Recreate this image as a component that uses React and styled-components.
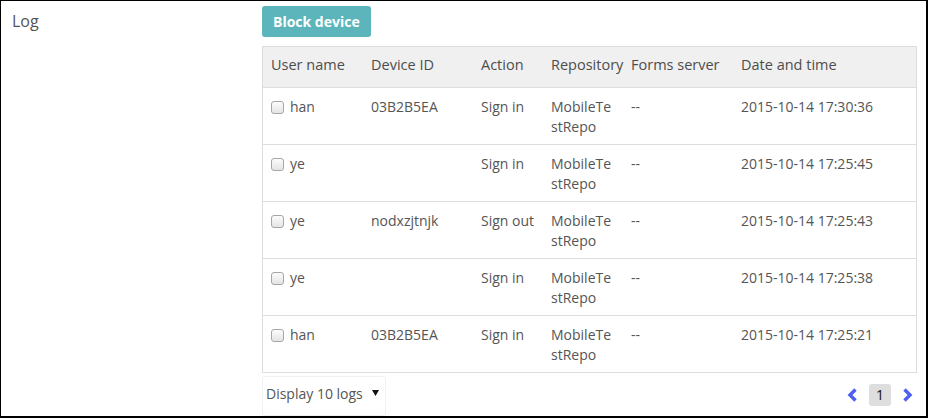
import React from "react";
import styled, { createGlobalStyle } from "styled-components";

const GlobalStyle = createGlobalStyle`
  html, body { margin: 0; padding: 0; background: #fff; }
  body { font-family: "Open Sans", "Liberation Sans", sans-serif; }
`;

const Frame = styled.div`
  box-sizing: border-box;
  width: 928px;
  height: 418px;
  border-style: solid;
  border-color: #000;
  border-width: 1px 2px 2px 1px;
  overflow: hidden;
  display: flex;
  font-family: "Open Sans", "Liberation Sans", sans-serif;
  color: #555;
`;

const Label = styled.div`
  width: 261px;
  box-sizing: border-box;
  padding: 9px 0 0 11px;
  font-size: 16px;
  line-height: 22px;
  color: #555;
`;

const Main = styled.div`
  width: 655px;
  padding-top: 5px;
  display: flex;
  flex-direction: column;
  align-items: flex-start;
`;

const Button = styled.button`
  height: 31px;
  padding: 0 11px;
  border: none;
  border-radius: 3px;
  background: #5cb5bb;
  color: #fff;
  font-family: inherit;
  font-weight: 700;
  font-size: 14px;
  line-height: 31px;
  cursor: pointer;
`;

const Table = styled.div`
  box-sizing: border-box;
  width: 655px;
  margin-top: 9px;
  border: 1px solid #ddd;
  border-bottom: none;
`;

const Row = styled.div`
  display: grid;
  grid-template-columns: 100px 110px 70px 80px 110px 1fr;
  background: ${(p) => (p.$head ? "#f0f0f0" : "#fff")};
  border-bottom: 1px solid #ddd;
  height: ${(p) => (p.$head ? "40px" : "56px")};
  box-sizing: content-box;
`;

const Cell = styled.div`
  padding: ${(p) => (p.$head ? "8px" : "9px")} 8px 0 8px;
  font-size: ${(p) => (p.$head ? "14.5px" : "14px")};
  line-height: 20px;
  color: ${(p) => (p.$head ? "#4d4d4d" : "#555")};
  white-space: ${(p) => (p.$head ? "nowrap" : "normal")};
  word-break: break-all;
  min-width: 0;
`;

const NameCell = styled(Cell)`
  display: flex;
  align-items: flex-start;
  gap: 6px;
`;

const Check = styled.span`
  flex: none;
  box-sizing: border-box;
  width: 13px;
  height: 13px;
  margin-top: 4px;
  border: 1px solid #a6a6a6;
  border-radius: 3px;
  background: linear-gradient(#fcfcfc, #e4e4e4);
`;

const Footer = styled.div`
  width: 655px;
  display: flex;
  justify-content: space-between;
  align-items: flex-start;
  margin-top: 3px;
`;

const Select = styled.div`
  display: flex;
  align-items: flex-start;
  gap: 9px;
  height: 40px;
  padding: 7px 6px 0 3px;
  box-sizing: border-box;
  border: 1px solid #f2f2f2;
  border-radius: 3px;
  font-size: 14px;
  line-height: 20px;
  color: #555;
`;

const Caret = styled.svg`
  margin-top: 6px;
`;

const Pager = styled.div`
  display: flex;
  align-items: center;
  gap: 11px;
  padding: 8px 4px 0 0;
`;

const Arrow = styled.svg`
  display: block;
`;

const PageBox = styled.span`
  width: 22px;
  height: 22px;
  border-radius: 3px;
  background: #dedede;
  color: #111;
  font-size: 14px;
  line-height: 22px;
  text-align: center;
`;

const logs = [
  { user: "han", device: "03B2B5EA", action: "Sign in", time: "2015-10-14 17:30:36" },
  { user: "ye", device: "", action: "Sign in", time: "2015-10-14 17:25:45" },
  { user: "ye", device: "nodxzjtnjk", action: "Sign out", time: "2015-10-14 17:25:43" },
  { user: "ye", device: "", action: "Sign in", time: "2015-10-14 17:25:38" },
  { user: "han", device: "03B2B5EA", action: "Sign in", time: "2015-10-14 17:25:21" },
];

const headers = ["User name", "Device ID", "Action", "Repository", "Forms server", "Date and time"];

export default function App() {
  return (
    <>
      <GlobalStyle />
      <Frame>
        <Label>Log</Label>
        <Main>
          <Button>Block device</Button>
          <Table>
            <Row $head>
              {headers.map((h) => (
                <Cell $head key={h}>{h}</Cell>
              ))}
            </Row>
            {logs.map((l, i) => (
              <Row key={i}>
                <NameCell>
                  <Check />
                  <span>{l.user}</span>
                </NameCell>
                <Cell>{l.device}</Cell>
                <Cell>{l.action}</Cell>
                <Cell>MobileTestRepo</Cell>
                <Cell>--</Cell>
                <Cell>{l.time}</Cell>
              </Row>
            ))}
          </Table>
          <Footer>
            <Select>
              <span>Display 10 logs</span>
              <Caret width="7" height="6" viewBox="0 0 7 6">
                <path d="M0 0 H7 L3.5 6 Z" fill="#111" />
              </Caret>
            </Select>
            <Pager>
              <Arrow width="11" height="14" viewBox="0 0 11 14">
                <path d="M8.5 1.5 L3 7 L8.5 12.5" fill="none" stroke="#4f5ef2" strokeWidth="3.4" />
              </Arrow>
              <PageBox>1</PageBox>
              <Arrow width="11" height="14" viewBox="0 0 11 14">
                <path d="M2.5 1.5 L8 7 L2.5 12.5" fill="none" stroke="#4f5ef2" strokeWidth="3.4" />
              </Arrow>
            </Pager>
          </Footer>
        </Main>
      </Frame>
    </>
  );
}
